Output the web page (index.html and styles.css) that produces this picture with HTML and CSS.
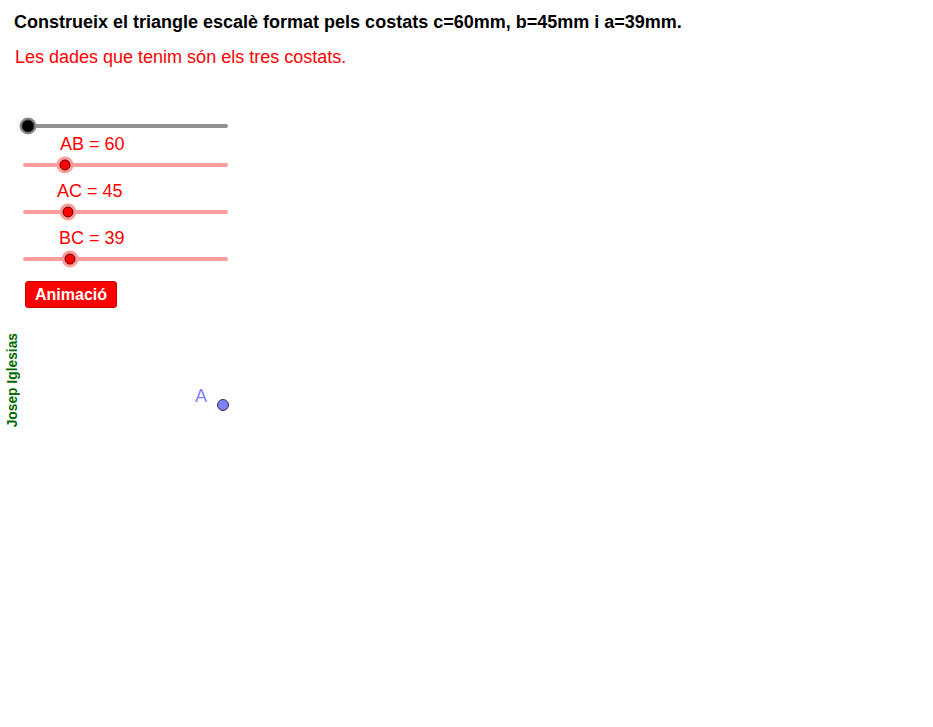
FILE: index.html
```html
<!DOCTYPE html>
<html lang="ca">
<head>
<meta charset="utf-8">
<title>Triangle escalè</title>
<link rel="stylesheet" href="styles.css">
</head>
<body>
<div class="canvas">
  <h1 class="title">Construeix el triangle escalè format pels costats c=60mm, b=45mm i a=39mm.</h1>
  <p class="sub">Les dades que tenim són els tres costats.</p>

  <div class="panel">
    <div class="track track-gray"><span class="knob knob-black" style="left:5px"></span></div>

    <div class="label" style="margin-left:37px">AB = 60</div>
    <div class="track track-red"><span class="knob knob-red" style="left:42px"></span></div>

    <div class="label label-gap" style="margin-left:34px">AC = 45</div>
    <div class="track track-red"><span class="knob knob-red" style="left:45px"></span></div>

    <div class="label label-gap" style="margin-left:36px">BC = 39</div>
    <div class="track track-red"><span class="knob knob-red" style="left:47px"></span></div>

    <button class="btn">Animació</button>
  </div>

  <div class="author">Josep Iglesias</div>
  <div class="point-label">A</div>
  <div class="point"></div>
</div>
</body>
</html>
```

FILE: styles.css
```css
html, body {
  margin: 0;
  padding: 0;
  background: #ffffff;
}

.canvas {
  position: relative;
  width: 933px;
  height: 727px;
  font-family: "Liberation Sans", Arial, sans-serif;
  overflow: hidden;
}

.title {
  margin: 0;
  padding: 11px 0 0 14px;
  font-size: 18px;
  line-height: 22px;
  font-weight: bold;
  color: #000000;
}

.sub {
  margin: 13px 0 0 15px;
  font-size: 18px;
  line-height: 22px;
  color: #ff0000;
}

.panel {
  margin: 56px 0 0 23px;
  display: flex;
  flex-direction: column;
  align-items: flex-start;
}

.track {
  position: relative;
  width: 205px;
  height: 4px;
  border-radius: 2px;
}

.track-gray {
  background: #929292;
}

.track-red {
  background: #ff9c9c;
  margin-top: 9px;
}

.label {
  margin-top: 6px;
  font-size: 18px;
  line-height: 20px;
  color: #ff0000;
}

.label-gap {
  margin-top: 14px;
}

.knob {
  position: absolute;
  top: 2px;
  border-radius: 50%;
  transform: translate(-50%, -50%);
  box-sizing: border-box;
}

.knob-black {
  width: 13px;
  height: 13px;
  background: #000000;
  border: 1px solid #333333;
  box-shadow: 0 0 0 2px #8a8a8a;
}

.knob-red {
  width: 11px;
  height: 11px;
  background: #ff0000;
  border: 1px solid #5a0000;
  box-shadow: 0 0 0 3px #ff9c9c;
}

.btn {
  margin: 20px 0 0 2px;
  width: 92px;
  height: 27px;
  padding: 0;
  background: #ff0000;
  border: 1px solid #c80000;
  border-radius: 3px;
  color: #ffffff;
  font-family: "Liberation Sans", Arial, sans-serif;
  font-size: 16px;
  font-weight: bold;
  line-height: 24px;
}

.author {
  position: absolute;
  left: 6px;
  top: 333px;
  writing-mode: vertical-rl;
  transform: rotate(180deg);
  font-size: 13.8px;
  line-height: 14px;
  font-weight: bold;
  color: #006a00;
}

.point-label {
  position: absolute;
  left: 195px;
  top: 385px;
  font-size: 18px;
  line-height: 22px;
  color: #7f7fff;
}

.point {
  position: absolute;
  left: 217px;
  top: 399px;
  width: 12px;
  height: 12px;
  box-sizing: border-box;
  border-radius: 50%;
  background: #7f7fff;
  border: 1px solid #333344;
}
```
